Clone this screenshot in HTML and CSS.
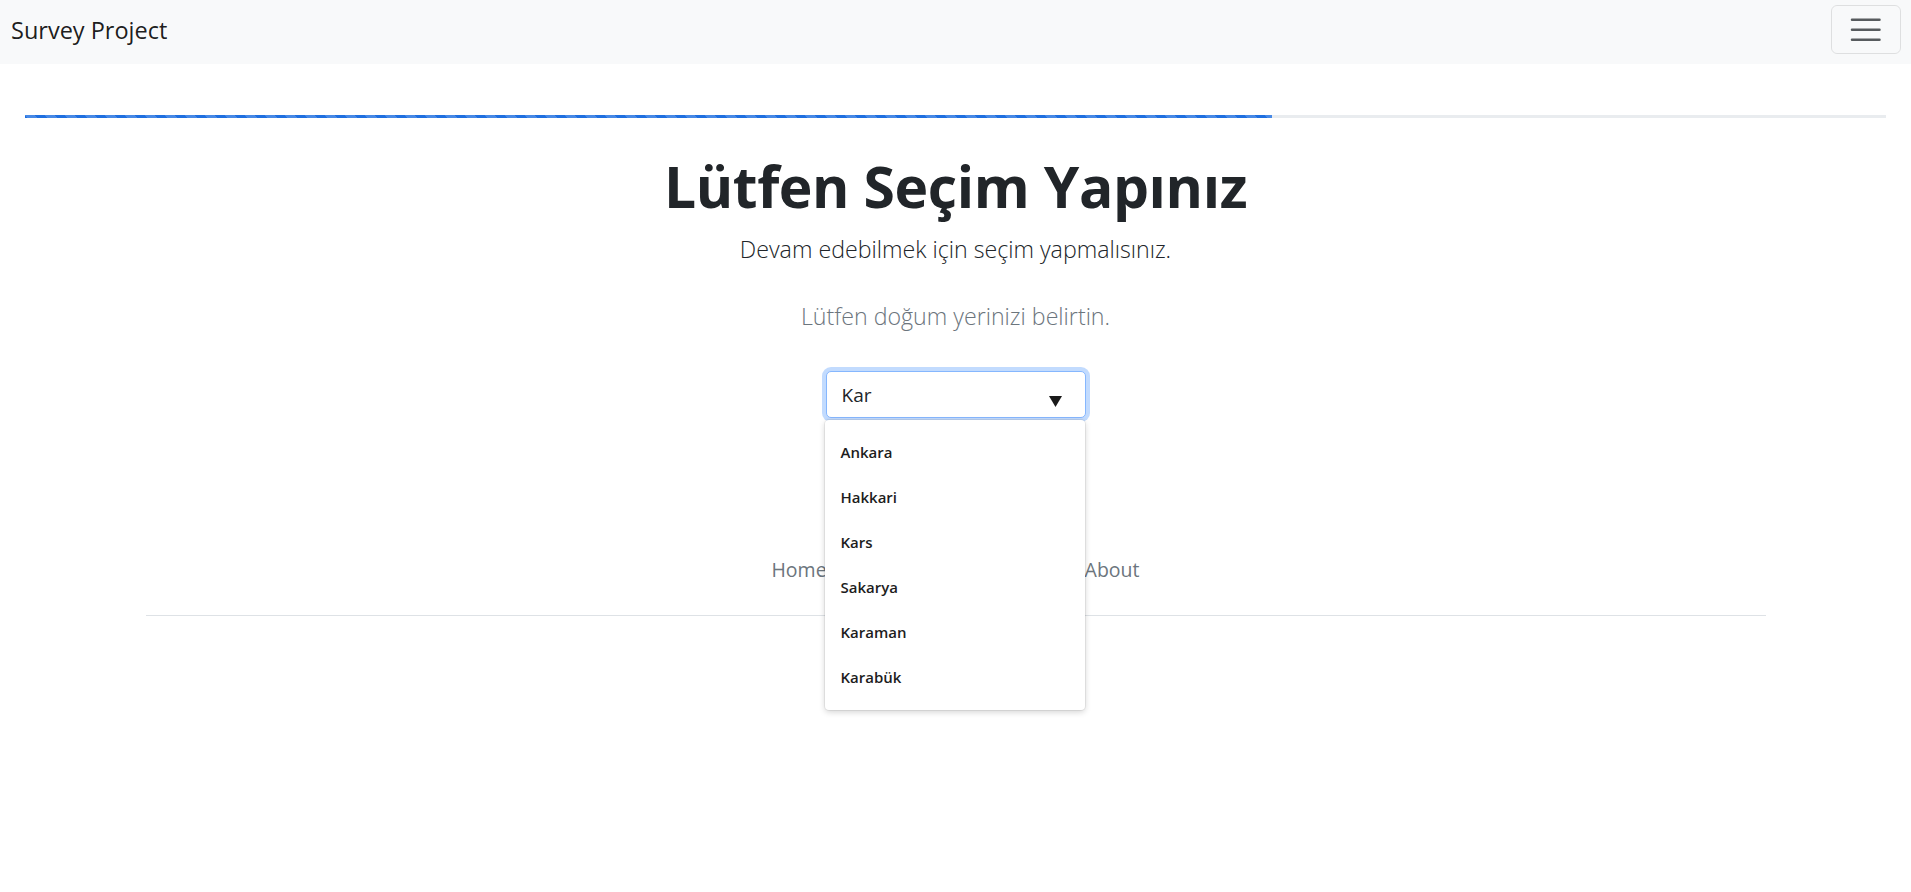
FILE: index.html
```html
<!DOCTYPE html>
<html lang="tr">
<head>
<meta charset="utf-8">
<title>Survey Project</title>
<link rel="stylesheet" href="styles.css">
</head>
<body>
<nav class="navbar">
  <a class="brand" href="#">Survey Project</a>
  <button class="toggler" type="button" aria-label="Toggle navigation">
    <svg class="toggler-icon" viewBox="0 0 30 30" width="37.5" height="37.5"><path d="M4 7h22M4 15h22M4 23h22" stroke="rgba(33,37,41,0.75)" stroke-width="2" stroke-linecap="round" fill="none"/></svg>
  </button>
</nav>
<main class="main">
  <div class="progress"><div class="progress-bar" style="width: 67%"></div></div>
  <section class="hero">
    <h1 class="title">Lütfen Seçim Yapınız</h1>
    <p class="lead">Devam edebilmek için seçim yapmalısınız.</p>
    <p class="question">Lütfen doğum yerinizi belirtin.</p>
    <div class="combo">
      <div class="combo-input">
        <span class="combo-value">Kar</span>
        <svg class="combo-arrow" viewBox="0 0 13 11" width="13" height="11"><path d="M0 0h13L6.5 11z" fill="#1a1a1a"/></svg>
      </div>
      <ul class="combo-list">
        <li class="combo-item">Ankara</li>
        <li class="combo-item">Hakkari</li>
        <li class="combo-item">Kars</li>
        <li class="combo-item">Sakarya</li>
        <li class="combo-item">Karaman</li>
        <li class="combo-item">Karabük</li>
      </ul>
    </div>
  </section>
  <footer class="footer">
    <ul class="footer-nav">
      <li><a class="footer-link" href="#">Home</a></li>
      <li><a class="footer-link" href="#">About</a></li>
    </ul>
  </footer>
</main>
</body>
</html>
```
FILE: styles.css
```css
* { box-sizing: border-box; }
html, body { margin: 0; padding: 0; }
body {
  font-family: "Open Sans", "Noto Sans", "Liberation Sans", sans-serif;
  color: #212529;
  background: #fff;
  width: 1911px;
  height: 892px;
  overflow: hidden;
}
.navbar {
  height: 64px;
  background: #f8f9fa;
  display: flex;
  justify-content: space-between;
  align-items: flex-start;
  padding: 5px 10px 0 10px;
}
.brand {
  font-size: 23.5px;
  line-height: 36px;
  padding: 7px 0 7px 1px;
  color: rgba(0,0,0,0.9);
  text-decoration: none;
}
.toggler {
  width: 70px;
  height: 49px;
  padding: 5px 15px;
  border: 1px solid rgba(0,0,0,0.1);
  border-radius: 6px;
  background: transparent;
  display: flex;
  align-items: center;
  justify-content: center;
}
.toggler-icon { display: block; }
.main { padding: 51px 25px 0 25px; }
.progress {
  height: 3px;
  background: #e9ecef;
  overflow: hidden;
}
.progress-bar {
  height: 100%;
  background-color: #1f6fe0;
  background-image: linear-gradient(45deg, rgba(255,255,255,.18) 25%, transparent 25%, transparent 50%, rgba(255,255,255,.18) 50%, rgba(255,255,255,.18) 75%, transparent 75%, transparent);
  background-size: 20px 20px;
}
.hero {
  display: flex;
  flex-direction: column;
  align-items: center;
  text-align: center;
}
.title {
  margin: 34px 0 0 0;
  font-size: 57px;
  line-height: 68px;
  font-weight: 700;
  letter-spacing: -0.4px;
}
.lead {
  margin: 11px 0 0 0;
  font-size: 23.2px;
  line-height: 36px;
  font-weight: 300;
}
.question {
  margin: 31px 0 0 0;
  font-size: 23.2px;
  line-height: 36px;
  font-weight: 300;
  color: #6c757d;
}
.combo {
  position: relative;
  margin-top: 37px;
  width: 260px;
}
.combo-input {
  height: 47px;
  display: flex;
  align-items: center;
  justify-content: space-between;
  padding: 0 23px 0 15px;
  border: 1px solid #86b7fe;
  border-radius: 5px;
  box-shadow: 0 0 0 4px rgba(13,110,253,0.25);
  background: #fff;
  font-size: 19px;
  color: #212529;
}
.combo-arrow { margin-top: 14px; }
.combo-list {
  position: absolute;
  top: 49px;
  left: -1px;
  width: 260px;
  margin: 0;
  padding: 10px 0;
  list-style: none;
  background: #fff;
  border-radius: 4px;
  box-shadow: 0 0 0 1px rgba(0,0,0,0.06), 0 2px 6px rgba(0,0,0,0.18);
  text-align: left;
  z-index: 10;
}
.combo-item {
  height: 45px;
  line-height: 45px;
  padding: 0 15px 0 16px;
  font-size: 15px;
  font-weight: 600;
  color: #1d1d1d;
}
.footer {
  width: 1620px;
  margin: 127px auto 0 auto;
}
.footer-nav {
  list-style: none;
  margin: 0;
  padding: 0 0 20px 0;
  display: flex;
  justify-content: center;
  gap: 218px;
  border-bottom: 1px solid #dee2e6;
}
.footer-link {
  display: block;
  padding: 10px 20px;
  font-size: 19.5px;
  line-height: 30px;
  color: #6c757d;
  text-decoration: none;
}
```
